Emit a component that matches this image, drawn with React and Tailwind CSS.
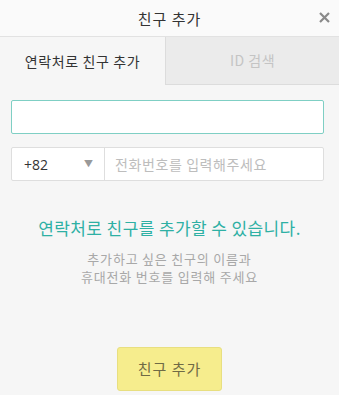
import React from 'react';

const font = { fontFamily: '"Noto Sans CJK KR", "Noto Sans", sans-serif' };

export default function App() {
  return (
    <div className="w-[339px] h-[395px] bg-[#f6f6f6] flex flex-col overflow-hidden" style={font}>
      <div className="relative h-[37px] shrink-0 bg-[#fafafa] border-b border-[#e2e2e2] flex items-center justify-center">
        <span className="text-[15px] tracking-[1px] text-[#333] leading-none">친구 추가</span>
        <svg className="absolute right-[9px] top-[12px]" width="11" height="11" viewBox="0 0 11 11">
          <path d="M1 1L10 10M10 1L1 10" stroke="#8a8a8a" strokeWidth="2.2" />
        </svg>
      </div>

      <div className="flex h-[48px] shrink-0">
        <div className="w-[165px] flex items-center justify-center text-[14px] tracking-[0.6px] text-[#333]">
          연락처로 친구 추가
        </div>
        <div className="flex-1 bg-[#ebebeb] border-l border-b border-[#dcdcdc] flex items-center justify-center text-[14px] tracking-[0.5px] text-[#c4c4c4]">
          ID 검색
        </div>
      </div>

      <div className="pl-[11px] pr-[15px] pt-[15px] flex flex-col gap-[13px]">
        <div className="h-[34px] bg-white border border-[#7fcfc4] rounded-[2px]"></div>
        <div className="h-[34px] bg-white border border-[#dedede] rounded-[2px] flex items-center">
          <div className="w-[93px] flex items-center justify-between pl-[12px] pr-[11px] h-full border-r border-[#dedede]">
            <span className="text-[14px] text-[#333]" style={{ fontFamily: '"Open Sans", sans-serif' }}>+82</span>
            <span className="text-[9px] text-[#999]">▼</span>
          </div>
          <span className="pl-[10px] text-[14px] tracking-[0.6px] text-[#bdbdbd]">전화번호를 입력해주세요</span>
        </div>
      </div>

      <div className="mt-[38px] text-center text-[17px] tracking-[0.4px] text-[#2eb0a4] leading-none">
        연락처로 친구를 추가할 수 있습니다.
      </div>
      <div className="mt-[14px] text-center text-[13px] tracking-[0.8px] text-[#a8a8a8] leading-[18px]">
        <div>추가하고 싶은 친구의 이름과</div>
        <div>휴대전화 번호를 입력해 주세요</div>
      </div>

      <div className="mt-auto mb-[4px] flex justify-center">
        <button className="w-[105px] h-[44px] bg-[#f6ed8d] border border-[#e8df80] rounded-[3px] text-[15px] tracking-[1px] text-[#6f6a45]">
          친구 추가
        </button>
      </div>
    </div>
  );
}
